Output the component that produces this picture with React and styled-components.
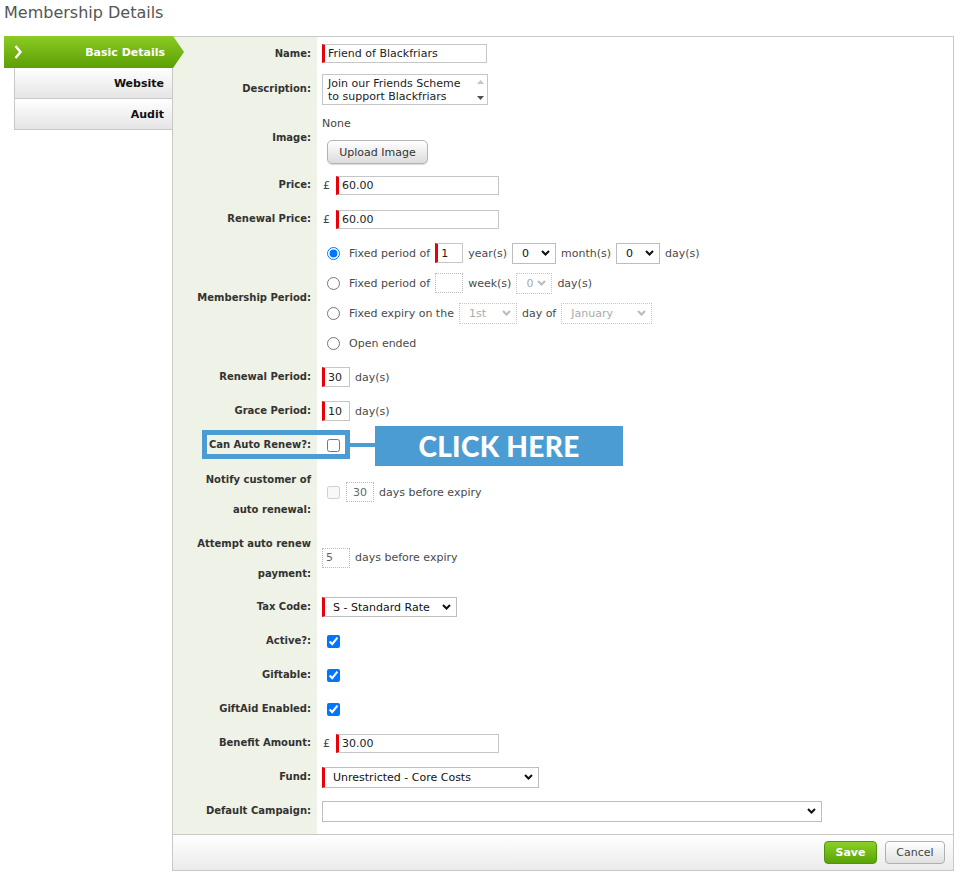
import React from 'react'
import styled, { createGlobalStyle } from 'styled-components'

const GlobalStyle = createGlobalStyle`
  html, body {
    margin: 0;
    padding: 0;
    background: #fff;
  }
  body {
    font-family: "DejaVu Sans", Verdana, sans-serif;
    font-size: 11px;
    color: #444;
  }
`

const BLUE = '#4b9cd3'
const RED = '#e8000b'

const Page = styled.div`
  width: 960px;
  padding: 0 6px 0 4px;
  box-sizing: border-box;
`

const Title = styled.h1`
  margin: 0;
  height: 36px;
  padding-top: 3px;
  box-sizing: border-box;
  font-size: 16px;
  line-height: 20px;
  font-weight: normal;
  color: #555;
`

const Layout = styled.div`
  display: flex;
  align-items: flex-start;
`

const Tabs = styled.nav`
  width: 169px;
  margin-right: -1px;
  flex-shrink: 0;
  display: flex;
  flex-direction: column;
  position: relative;
  z-index: 2;
`

const ActiveTab = styled.div`
  width: 180px;
  height: 32px;
  box-sizing: border-box;
  padding: 0 19px 0 10px;
  display: flex;
  align-items: center;
  justify-content: space-between;
  background: linear-gradient(#8ccb24, #5c9f04);
  clip-path: polygon(0 0, 169px 0, 180px 50%, 169px 100%, 0 100%);
  color: #fff;
  font-size: 11px;
  font-weight: bold;
`

const Tab = styled.div`
  margin-left: 10px;
  width: 159px;
  height: 31px;
  box-sizing: border-box;
  padding-right: 8px;
  display: flex;
  align-items: center;
  justify-content: flex-end;
  border: 1px solid #c8c8c8;
  border-top: none;
  background: linear-gradient(#ffffff, #e5e5e5);
  color: #111;
  font-size: 11px;
  font-weight: bold;
`

const Panel = styled.section`
  flex: 1;
  border: 1px solid #c8c8c8;
`

const Body = styled.div`
  padding-bottom: 6px;
  background: linear-gradient(to right, #eff2e7 144px, #fff 144px);
`

const Row = styled.div`
  position: relative;
  display: flex;
  height: ${p => p.h || 34}px;
`

const Label = styled.div`
  width: 144px;
  flex-shrink: 0;
  box-sizing: border-box;
  padding-right: 6px;
  display: flex;
  align-items: center;
  justify-content: flex-end;
  text-align: right;
  font-size: 10px;
  line-height: 30px;
  font-weight: bold;
  color: #333;
`

const Value = styled.div`
  flex: 1;
  padding-left: 5px;
  padding-top: ${p => p.pt || 0}px;
  padding-bottom: ${p => p.pb || 0}px;
  display: flex;
  flex-direction: ${p => (p.column ? 'column' : 'row')};
  align-items: ${p => (p.column ? 'flex-start' : 'center')};
  justify-content: center;
  gap: ${p => (p.column ? 0 : 5)}px;
  ${p => (p.column ? '' : 'justify-content: flex-start;')}
`

const TextInput = styled.input`
  box-sizing: border-box;
  width: ${p => p.w}px;
  height: ${p => p.h || 19}px;
  margin: 0;
  padding: 0 3px;
  border: 1px ${p => (p.disabled ? 'dotted #bcbcbc' : 'solid #c6c6c6')};
  ${p => p.required && `border-left: 3px solid ${RED};`}
  border-radius: 0;
  background: #fff;
  font-family: inherit;
  font-size: 11px;
  color: ${p => (p.disabled ? '#666' : '#222')};
  outline: none;
  text-align: ${p => (p.center ? 'center' : 'left')};
`

const SelectBox = styled.div`
  box-sizing: border-box;
  width: ${p => p.w}px;
  height: ${p => p.h || 21}px;
  padding: 0 5px 0 ${p => (p.required ? 8 : 9)}px;
  display: flex;
  align-items: center;
  justify-content: space-between;
  border: 1px ${p => (p.disabled ? 'dotted #c4c4c4' : 'solid #bdbdbd')};
  ${p => p.required && `border-left: 3px solid ${RED};`}
  background: #fff;
  color: ${p => (p.disabled ? '#aaa' : '#111')};
  font-size: 11px;
  white-space: nowrap;
`

const Chevron = ({ muted }) => (
  <svg width="9" height="6" viewBox="0 0 9 6">
    <path d="M1 1 L4.5 4.5 L8 1" fill="none" stroke={muted ? '#bbb' : '#111'} strokeWidth="2" />
  </svg>
)

const Select = ({ w, h, value, required, disabled }) => (
  <SelectBox w={w} h={h} required={required} disabled={disabled}>
    <span>{value}</span>
    <Chevron muted={disabled} />
  </SelectBox>
)

const TextArea = styled.div`
  box-sizing: border-box;
  width: 166px;
  height: 31px;
  border: 1px solid #c6c6c6;
  display: flex;
  background: #fff;
`

const AreaText = styled.div`
  flex: 1;
  padding: 2px 0 0 5px;
  line-height: 13px;
  font-size: 11px;
  color: #222;
  white-space: pre;
  overflow: hidden;
`

const ScrollBar = styled.div`
  width: 14px;
  padding: 5px 0 4px;
  display: flex;
  flex-direction: column;
  justify-content: space-between;
  align-items: center;
`

const Text = styled.span`
  color: #4a4a4a;
  white-space: nowrap;
  ${p => p.spaced && 'margin-left: 4px;'}
`

const Currency = styled.span`
  color: #444;
  margin: 0 1px 0 1px;
`

const UploadButton = styled.button`
  margin: 9px 0 0 5px;
  width: 101px;
  height: 24px;
  border: 1px solid #b4b4b4;
  border-radius: 5px;
  background: linear-gradient(#ffffff, #dcdcdc);
  box-shadow: 0 1px 1px rgba(0, 0, 0, 0.15);
  font-family: inherit;
  font-size: 11px;
  color: #333;
  padding: 0;
`

const NoneText = styled.span`
  line-height: 14px;
  color: #444;
`

const Radio = styled.input.attrs({ type: 'radio' })`
  margin: 0 4px 0 5px;
  width: 13px;
  height: 13px;
`

const Check = styled.input.attrs({ type: 'checkbox' })`
  margin: 0 1px 0 5px;
  width: 13px;
  height: 13px;
`

const PeriodList = styled.div`
  flex: 1;
  padding: 2px 0 2px 5px;
  display: flex;
  flex-direction: column;
`

const PeriodLine = styled.div`
  height: 30px;
  display: flex;
  align-items: center;
  gap: 5px;
`

const Highlight = styled.div`
  position: absolute;
  left: 29px;
  top: 2px;
  width: 148px;
  height: 29px;
  box-sizing: border-box;
  border: 5px solid ${BLUE};
  pointer-events: none;
`

const Connector = styled.div`
  position: absolute;
  left: 177px;
  top: 15px;
  width: 25px;
  height: 4px;
  background: ${BLUE};
`

const Callout = styled.div`
  position: absolute;
  left: 202px;
  top: -2px;
  width: 248px;
  height: 40px;
  display: flex;
  align-items: center;
  justify-content: center;
  background: ${BLUE};
  color: #fff;
  font-family: Lato, "Open Sans", sans-serif;
  font-weight: 900;
  font-size: 28px;
  letter-spacing: 0.3px;
  z-index: 3;
`

const Footer = styled.div`
  height: 35px;
  border-top: 1px solid #c8c8c8;
  background: linear-gradient(#ffffff, #ebebeb);
  display: flex;
  align-items: center;
  justify-content: flex-end;
  gap: 8px;
  padding-right: 8px;
`

const Button = styled.button`
  height: 23px;
  width: ${p => p.w}px;
  padding: 0;
  border-radius: 4px;
  font-family: inherit;
  font-size: 11px;
  border: 1px solid ${p => (p.primary ? '#4f960c' : '#b0b0b0')};
  background: ${p => (p.primary ? 'linear-gradient(#8ad026, #5aa305)' : 'linear-gradient(#ffffff, #e0e0e0)')};
  color: ${p => (p.primary ? '#fff' : '#444')};
  font-weight: ${p => (p.primary ? 'bold' : 'normal')};
`

function App() {
  return (
    <Page>
      <GlobalStyle />
      <Title>Membership Details</Title>
      <Layout>
        <Tabs>
          <ActiveTab>
            <svg width="8" height="14" viewBox="0 0 8 14">
              <path d="M1.5 1 L6.5 7 L1.5 13" fill="none" stroke="#fff" strokeWidth="2.4" />
            </svg>
            <span>Basic Details</span>
          </ActiveTab>
          <Tab>Website</Tab>
          <Tab>Audit</Tab>
        </Tabs>

        <Panel>
          <Body>
            <Row h={33}>
              <Label>Name:</Label>
              <Value>
                <TextInput w={165} required defaultValue="Friend of Blackfriars" readOnly />
              </Value>
            </Row>

            <Row h={38}>
              <Label>Description:</Label>
              <Value>
                <TextArea>
                  <AreaText>{'Join our Friends Scheme\nto support Blackfriars'}</AreaText>
                  <ScrollBar>
                    <svg width="7" height="4" viewBox="0 0 7 4"><path d="M0 4 L3.5 0 L7 4 Z" fill="#c4c4c4" /></svg>
                    <svg width="7" height="4" viewBox="0 0 7 4"><path d="M0 0 L3.5 4 L7 0 Z" fill="#505050" /></svg>
                  </ScrollBar>
                </TextArea>
              </Value>
            </Row>

            <Row h={60}>
              <Label>Image:</Label>
              <Value column pt={5}>
                <NoneText>None</NoneText>
                <UploadButton>Upload Image</UploadButton>
              </Value>
            </Row>

            <Row>
              <Label>Price:</Label>
              <Value>
                <Currency>£</Currency>
                <TextInput w={163} required defaultValue="60.00" readOnly />
              </Value>
            </Row>

            <Row>
              <Label>Renewal Price:</Label>
              <Value>
                <Currency>£</Currency>
                <TextInput w={163} required defaultValue="60.00" readOnly />
              </Value>
            </Row>

            <Row h={124}>
              <Label>Membership Period:</Label>
              <PeriodList>
                <PeriodLine>
                  <Radio name="period" defaultChecked />
                  <Text>Fixed period of</Text>
                  <TextInput w={28} h={20} required defaultValue="1" readOnly />
                  <Text>year(s)</Text>
                  <Select w={44} value="0" />
                  <Text>month(s)</Text>
                  <Select w={44} value="0" />
                  <Text>day(s)</Text>
                </PeriodLine>
                <PeriodLine>
                  <Radio name="period" />
                  <Text>Fixed period of</Text>
                  <TextInput w={28} h={20} disabled />
                  <Text>week(s)</Text>
                  <Select w={36} value="0" disabled />
                  <Text>day(s)</Text>
                </PeriodLine>
                <PeriodLine>
                  <Radio name="period" />
                  <Text>Fixed expiry on the</Text>
                  <Select w={58} value="1st" disabled />
                  <Text>day of</Text>
                  <Select w={91} value="January" disabled />
                </PeriodLine>
                <PeriodLine>
                  <Radio name="period" />
                  <Text>Open ended</Text>
                </PeriodLine>
              </PeriodList>
            </Row>

            <Row>
              <Label>Renewal Period:</Label>
              <Value>
                <TextInput w={28} h={20} required defaultValue="30" readOnly />
                <Text>day(s)</Text>
              </Value>
            </Row>

            <Row>
              <Label>Grace Period:</Label>
              <Value>
                <TextInput w={28} h={20} required defaultValue="10" readOnly />
                <Text>day(s)</Text>
              </Value>
            </Row>

            <Row>
              <Label>Can Auto Renew?:</Label>
              <Value>
                <Check />
              </Value>
              <Highlight />
              <Connector />
              <Callout>CLICK HERE</Callout>
            </Row>

            <Row h={66}>
              <Label>Notify customer of<br />auto renewal:</Label>
              <Value pb={6}>
                <Check disabled />
                <TextInput w={28} h={20} disabled center defaultValue="30" />
                <Text>days before expiry</Text>
              </Value>
            </Row>

            <Row h={62}>
              <Label>Attempt auto renew<br />payment:</Label>
              <Value pb={3}>
                <TextInput w={28} h={20} disabled defaultValue="5" />
                <Text>days before expiry</Text>
              </Value>
            </Row>

            <Row>
              <Label>Tax Code:</Label>
              <Value>
                <Select w={135} h={20} required value="S - Standard Rate" />
              </Value>
            </Row>

            <Row>
              <Label>Active?:</Label>
              <Value>
                <Check defaultChecked />
              </Value>
            </Row>

            <Row>
              <Label>Giftable:</Label>
              <Value>
                <Check defaultChecked />
              </Value>
            </Row>

            <Row>
              <Label>GiftAid Enabled:</Label>
              <Value>
                <Check defaultChecked />
              </Value>
            </Row>

            <Row>
              <Label>Benefit Amount:</Label>
              <Value>
                <Currency>£</Currency>
                <TextInput w={163} required defaultValue="30.00" readOnly />
              </Value>
            </Row>

            <Row>
              <Label>Fund:</Label>
              <Value>
                <Select w={217} required value="Unrestricted - Core Costs" />
              </Value>
            </Row>

            <Row>
              <Label>Default Campaign:</Label>
              <Value>
                <Select w={500} value="" />
              </Value>
            </Row>
          </Body>

          <Footer>
            <Button primary w={53}>Save</Button>
            <Button w={60}>Cancel</Button>
          </Footer>
        </Panel>
      </Layout>
    </Page>
  )
}

export default App
